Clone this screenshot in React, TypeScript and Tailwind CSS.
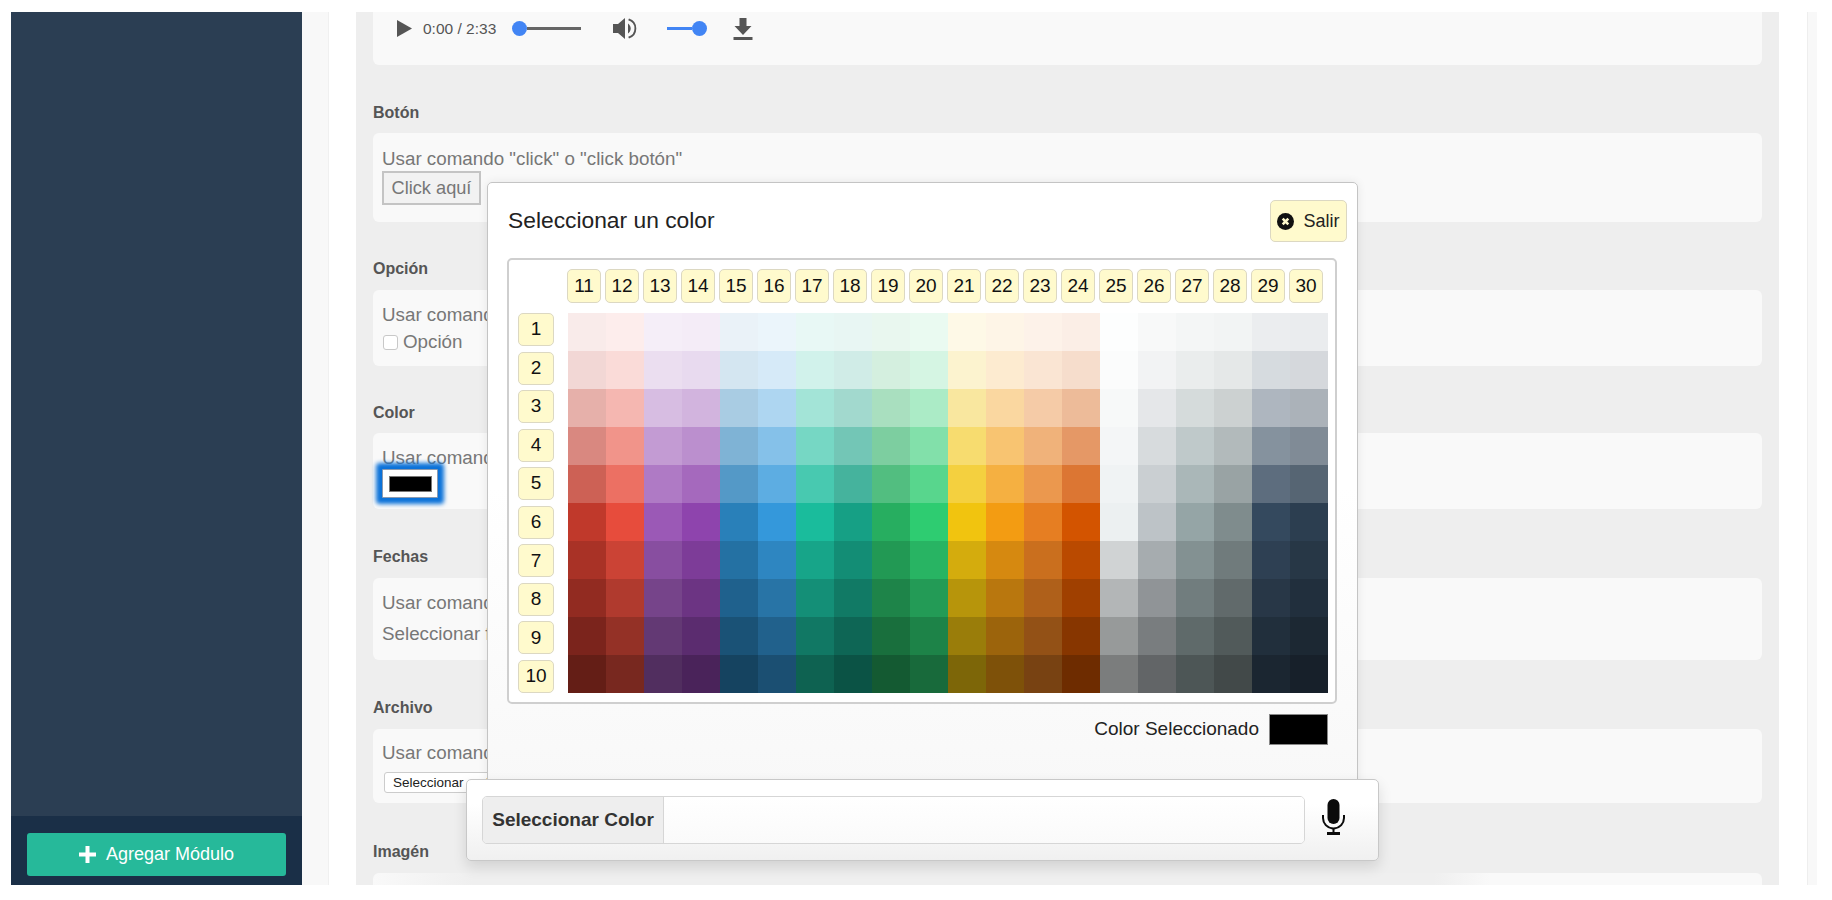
import React from "react";

const palette: string[][] = [
  "F9EBEA FDEDEC F5EEF8 F4ECF7 EAF2F8 EBF5FB E8F8F5 E8F6F3 E9F7EF EAFAF1 FEF9E7 FEF5E7 FDF2E9 FBEEE6 FDFEFE F8F9F9 F4F6F6 F2F4F4 EBEDEF EAECEE",
  "F2D7D5 FADBD8 EBDEF0 E8DAEF D4E6F1 D6EAF8 D1F2EB D0ECE7 D4EFDF D5F5E3 FCF3CF FDEBD0 FAE5D3 F6DDCC FBFCFC F2F3F4 EAEDED E5E8E8 D6DBDF D5D8DC",
  "E6B0AA F5B7B1 D7BDE2 D2B4DE A9CCE3 AED6F1 A3E4D7 A2D9CE A9DFBF ABEBC6 F9E79F FAD7A0 F5CBA7 EDBB99 F7F9F9 E5E7E9 D5DBDB CCD1D1 AEB6BF ABB2B9",
  "D98880 F1948A C39BD3 BB8FCE 7FB3D5 85C1E9 76D7C4 73C6B6 7DCEA0 82E0AA F7DC6F F8C471 F0B27A E59866 F4F6F7 D7DBDD BFC9CA B2BABB 85929E 808B96",
  "CD6155 EC7063 AF7AC5 A569BD 5499C7 5DADE2 48C9B0 45B39D 52BE80 58D68D F4D03F F5B041 EB984E DC7633 F0F3F4 CACFD2 AAB7B8 99A3A4 5D6D7E 566573",
  "C0392B E74C3C 9B59B6 8E44AD 2980B9 3498DB 1ABC9C 16A085 27AE60 2ECC71 F1C40F F39C12 E67E22 D35400 ECF0F1 BDC3C7 95A5A6 7F8C8D 34495E 2C3E50",
  "A93226 CB4335 884EA0 7D3C98 2471A3 2E86C1 17A589 138D75 229954 28B463 D4AC0D D68910 CA6F1E BA4A00 D0D3D4 A6ACAF 839192 707B7C 2E4053 273746",
  "922B21 B03A2E 76448A 6C3483 1F618D 2874A6 148F77 117A65 1E8449 239B56 B7950B B9770E AF601A A04000 B3B6B7 909497 717D7E 616A6B 283747 212F3D",
  "7B241C 943126 633974 5B2C6F 1A5276 21618C 117864 0E6655 196F3D 1D8348 9A7D0A 9C640C 935116 873600 979A9A 797D7F 5F6A6A 515A5A 212F3C 1C2833",
  "641E16 78281F 512E5F 4A235A 154360 1B4F72 0E6251 0B5345 145A32 186A3B 7D6608 7E5109 784212 6E2C00 7B7D7D 626567 4D5656 424949 1B2631 17202A",
].map((r) => r.split(" "));

function Key({ n, className }: { n: number; className: string }) {
  return (
    <div className={"flex items-center justify-center rounded-[5px] border border-[#dcd8c2] bg-[#fffacd] text-[19px] text-[#111] " + className}>
      {n}
    </div>
  );
}

function Field({ label, mt, gap, className, children }: { label: string; mt: string; gap: string; className: string; children: React.ReactNode }) {
  return (
    <section className={mt}>
      <div className={"h-[20px] text-[16px] leading-[20px] font-bold text-[#555] " + gap}>{label}</div>
      <div className={"rounded-[6px] bg-[#f9f9f9] px-[9px] text-[18.800px] leading-[24px] text-[#777] " + className}>{children}</div>
    </section>
  );
}

export default function App() {
  return (
    <div className="relative h-[900px] w-[1832px] overflow-hidden bg-white font-['Liberation_Sans',Arial,sans-serif]">
      <div className="flex h-[885px] pl-[11px] pt-[12px]">
        <aside className="flex w-[291px] flex-col justify-end bg-[#2b3e53]">
          <div className="flex h-[69px] items-start bg-[#1a2f47] px-[16px] pt-[17px]">
            <button className="flex h-[43px] w-[259px] items-center justify-center gap-[10px] rounded-[3px] bg-[#26b99a] text-[18px] text-white">
              <svg width="17" height="17" viewBox="0 0 17 17" fill="#fff"><path d="M6.500 0h4v6.500H17v4h-6.500V17h-4v-6.500H0v-4h6.500z" /></svg>
              Agregar Módulo
            </button>
          </div>
        </aside>
        <div className="w-[27px] border-r border-[#f0f0f0] bg-[#f8f8f8]" />
        <div className="w-[27px]" />
        <main className="h-full flex-1 overflow-hidden bg-[#eeeeee] px-[17px]">
          <div className="flex h-[53px] items-start rounded-b-[6px] bg-[#f9f9f9] pl-[24px] pt-[8px] text-[#555]">
            <svg width="15" height="17" viewBox="0 0 15 17" fill="#555"><path d="M0 0l15 8.500L0 17z" /></svg>
            <span className="ml-[11px] text-[15.500px] leading-[17px]">0:00 / 2:33</span>
            <span className="ml-[16px] mt-[1px] flex h-[15px] w-[69px] items-center">
              <span className="h-[15px] w-[15px] rounded-full bg-[#4285f4]" />
              <span className="h-[3px] flex-1 bg-[#666]" />
            </span>
            <svg className="ml-[32px] -mt-[3px]" width="25" height="23" viewBox="0 0 25 23" fill="#555">
              <path d="M0 7h5l7-6v21l-7-6H0z" />
              <path d="M15 6.500a6 6 0 0 1 0 10z" />
              <path d="M16 1.500a10.500 10.500 0 0 1 0 20l-.8-1.800a8.500 8.500 0 0 0 0-16.400z" />
            </svg>
            <span className="ml-[29px] mt-[1px] flex h-[15px] w-[40px] items-center">
              <span className="h-[3px] flex-1 bg-[#4285f4]" />
              <span className="h-[15px] w-[15px] rounded-full bg-[#4285f4]" />
            </span>
            <svg className="ml-[26px] -mt-[2px]" width="20" height="22" viewBox="0 0 19 22" fill="#555">
              <path d="M6 0h7v8h5l-8.500 9L1 8h5z" />
              <path d="M0 19h19v3H0z" />
            </svg>
          </div>

          <Field label="Botón" mt="mt-[38px]" gap="mb-[10px]" className="h-[89px] pt-[14px]">
            <div>Usar comando "click" o "click botón"</div>
            <div className="flex h-[34px] w-[99px] items-center justify-center border-2 border-[#c4c4c4] bg-[#f2f2f2] text-[18.200px]">Click aquí</div>
          </Field>
          <Field label="Opción" mt="mt-[37px]" gap="mb-[11px]" className="h-[76px] pt-[13px]">
            <div>Usar comando "opción"</div>
            <label className="mt-[3px] flex items-center">
              <span className="ml-[1px] h-[15px] w-[15px] rounded-[3px] border border-[#c8c8c8] bg-white" />
              <span className="ml-[5px]">Opción</span>
            </label>
          </Field>
          <Field label="Color" mt="mt-[37px]" gap="mb-[10px]" className="h-[76px] pt-[13px]">
            <div>Usar comando "color"</div>
            <div className="relative -mt-[1px] flex h-[29px] w-[56px] items-center justify-center rounded-[1px] border border-[#8c9bb0] bg-white shadow-[0_0_4px_6px_#0b72d9]">
              <span className="h-[16px] w-[43px] border border-[#777] bg-black" />
            </div>
          </Field>
          <Field label="Fechas" mt="mt-[38px]" gap="mb-[11px]" className="h-[82px] pt-[13px]">
            <div>Usar comando "fecha"</div>
            <div className="mt-[7px]">Seleccionar fecha</div>
          </Field>
          <Field label="Archivo" mt="mt-[38px]" gap="mb-[11px]" className="h-[74px] pt-[12px]">
            <div>Usar comando "archivo"</div>
            <div className="ml-[2px] mt-[7px] flex h-[21px] w-[130px] items-center rounded-[3px] border border-[#ccc] bg-white pl-[8px] text-[13.500px] text-[#222]">Seleccionar archivo</div>
          </Field>
          <Field label="Imagén" mt="mt-[39px]" gap="mb-[11px]" className="h-[60px]">
            <div />
          </Field>
        </main>
        <div className="w-[28px]" />
        <div className="w-[10px] border-l border-[#eeeeee] bg-[#f8f8f8]" />
        <div className="w-[15px]" />
      </div>

      <div className="absolute left-[373px] top-[873px] h-[12px] w-[1117px] bg-[linear-gradient(to_right,transparent,#efefef_9%,#efefef_95%,transparent)]" />

      <div className="absolute left-[487px] top-[182px] h-[610px] w-[871px] rounded-[5px] border border-[#c4c4c4] bg-gradient-to-b from-white from-50% to-[#f8f8f8] px-[19px] pt-[17px] shadow-[0_0_10px_rgba(0,0,0,0.08)]">
        <div className="flex h-[42px] items-center justify-between">
          <h2 className="-mt-[2px] ml-[1px] text-[22.800px] text-[#222]">Seleccionar un color</h2>
          <button className="mr-[-9px] flex h-[42px] w-[77px] items-center justify-center gap-[9px] rounded-[5px] border border-[#dcd8c2] bg-[#fffacd] text-[18px] text-[#222]">
            <svg width="17" height="17" viewBox="0 0 17 17"><circle cx="8.500" cy="8.500" r="8.500" fill="#111" /><path d="M5.700 5.700l5.600 5.600M11.300 5.700l-5.600 5.600" stroke="#fffacd" strokeWidth="2.600" /></svg>
            Salir
          </button>
        </div>
        <div className="mt-[16px] h-[446px] w-[830px] rounded-[5px] border-2 border-[#cfcfcf] bg-white pl-[9px] pt-[9px]">
          <div className="flex pl-[49px]">
            {Array.from({ length: 20 }, (_, i) => (
              <Key key={i} n={i + 11} className="mr-[4px] h-[34px] w-[34px]" />
            ))}
          </div>
          <div className="mt-[10px] flex">
            <div className="flex h-[380px] w-[50px] flex-col justify-between">
              {Array.from({ length: 10 }, (_, i) => (
                <Key key={i} n={i + 1} className="h-[33px] w-[36px]" />
              ))}
            </div>
            <div className="grid h-[380px] w-[760px] grid-cols-[repeat(20,38px)] grid-rows-[repeat(10,38px)]">
              {palette.flat().map((c, i) => (
                <div key={i} style={{ backgroundColor: "#" + c }} />
              ))}
            </div>
          </div>
        </div>
        <div className="mt-[10px] flex items-center justify-end pr-[10px]">
          <span className="text-[19px] text-[#222]">Color Seleccionado</span>
          <span className="ml-[10px] h-[31px] w-[59px] border border-[#888] bg-black" />
        </div>
      </div>

      <div className="absolute left-[466px] top-[779px] flex h-[82px] w-[913px] items-start rounded-[5px] border border-[#c8c8c8] bg-gradient-to-b from-white from-30% to-[#f0f0f0] pl-[15px] pt-[16px] shadow-[0_6px_14px_rgba(0,0,0,0.12)]">
        <div className="flex h-[48px] w-[823px] overflow-hidden rounded-[5px] border border-[#d6d6d6]">
          <div className="flex w-[181px] items-center justify-center border-r border-[#d6d6d6] bg-[#eeeeee] text-[19px] font-bold text-[#333]">Seleccionar Color</div>
          <div className="flex-1 bg-gradient-to-b from-white to-[#fafafa]" />
        </div>
        <svg className="ml-[16px] mt-[3px]" width="25" height="36" viewBox="0 0 25 36" fill="#0b0b0b">
          <rect x="6.500" y="0" width="12" height="25" rx="6" />
          <path d="M1 16h2v3a9.500 9.500 0 0 0 19 0v-3h2v3a11.500 11.500 0 0 1-10.500 11.400V33H19v3H6v-3h5.500v-2.600A11.500 11.500 0 0 1 1 19z" />
        </svg>
      </div>
    </div>
  );
}
